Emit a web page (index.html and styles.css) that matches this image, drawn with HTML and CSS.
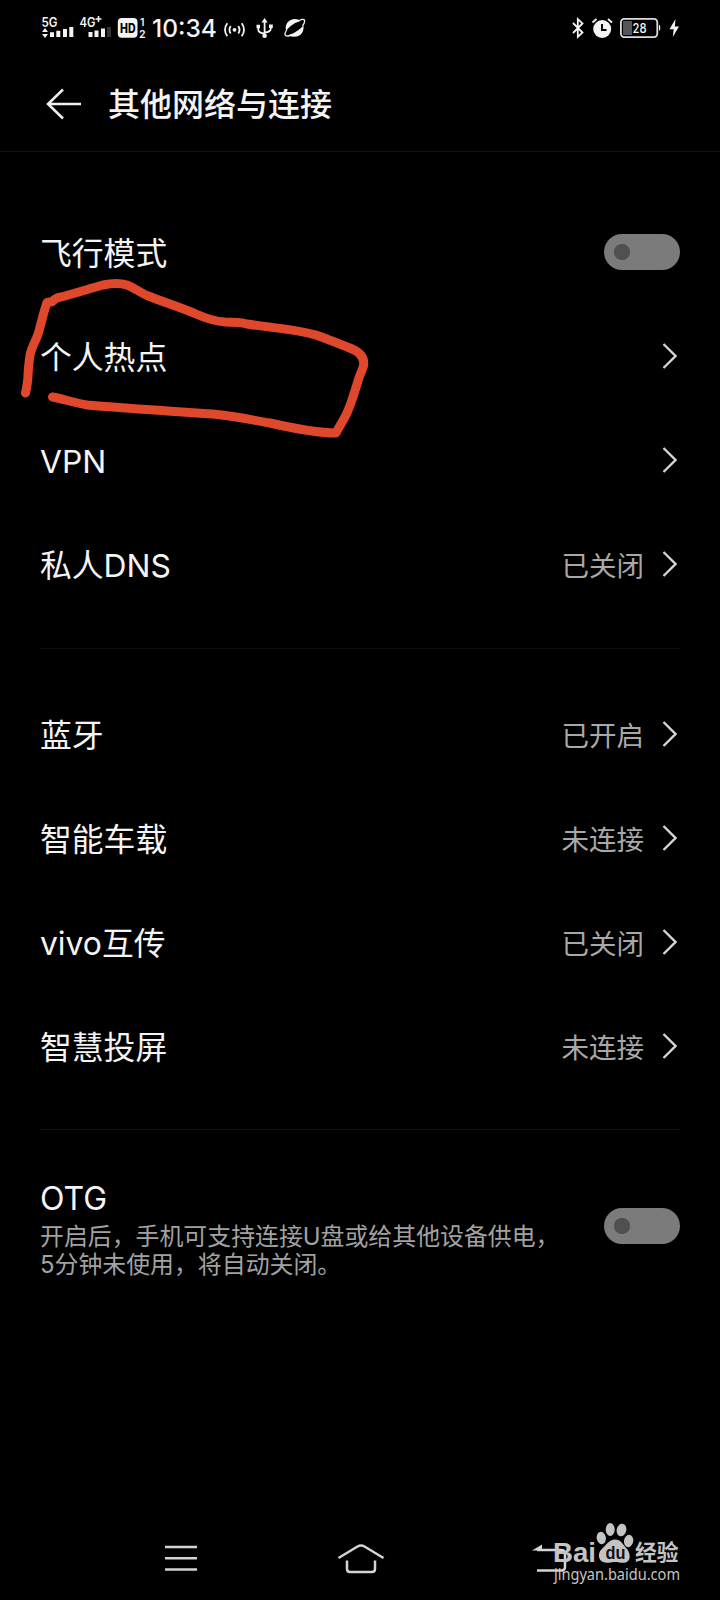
FILE: index.html
```html
<!DOCTYPE html>
<html lang="zh-CN">
<head>
<meta charset="utf-8">
<title>其他网络与连接</title>
<link rel="stylesheet" href="styles.css">
</head>
<body>
<div class="phone">
  <div class="status">
    <svg class="s-icon" width="37" height="28" viewBox="40 14 37 28">
      <text x="41.5" y="26.6" class="tiny" textLength="16" lengthAdjust="spacingAndGlyphs">5G</text>
      <path d="M42 32l3-4 3 4zM42 34l3 4 3-4z"/>
      <path d="M50 32.300h4V37h-4zM56.300 30.700h4V37h-4zM63 29h4v8h-4zM69.300 27h4v10h-4z"/>
    </svg>
    <svg class="s-icon" width="37" height="28" viewBox="77 14 37 28">
      <text x="79.500" y="26.600" class="tiny" textLength="16" lengthAdjust="spacingAndGlyphs">4G</text>
      <path d="M95.500 19h6M98.500 16v6" stroke="#f4f4f4" stroke-width="1.600"/>
      <path d="M88.500 32h4v5h-4zM94.500 30.500h4V37h-4zM101 28.500h4V37h-4z"/>
      <path d="M107 27h4v10h-4z" fill="#333"/>
    </svg>
    <svg class="s-icon" width="36" height="28" viewBox="114 14 36 28">
      <rect x="117.800" y="18" width="19.700" height="19.700" rx="4"/>
      <text x="120" y="32.600" class="hd" textLength="15.500" lengthAdjust="spacingAndGlyphs">HD</text>
      <text x="140" y="26" class="sim">1</text>
      <text x="139" y="37.500" class="sim">2</text>
    </svg>
    <span class="clock">10:34</span>
    <svg class="s-icon" width="28" height="28" viewBox="222 14 28 28">
      <circle cx="234.500" cy="29.800" r="1.900"/>
      <path class="line" d="M230.700 26q-2.500 3.800 0 7.600M238.300 26q2.500 3.800 0 7.600M227.300 23.300q-4.600 6.500 0 13M241.700 23.300q4.600 6.500 0 13"/>
    </svg>
    <svg class="s-icon" width="30" height="28" viewBox="250 14 30 28">
      <path class="line" d="M264.600 21v14M258.300 26.500v3q0 3.500 6.300 4M270.800 26.500v2q0 3.500-6.200 4"/>
      <path d="M261.500 22.500l3.100-4.500 3.100 4.500zM256.500 24.800h3.500v3.500h-3.500zM269 24.500h3.800V28H269z"/>
      <circle cx="264.600" cy="35.700" r="2.300"/>
    </svg>
    <svg class="s-icon" width="30" height="28" viewBox="280 14 30 28">
      <path d="M286 30.500C284.500 24 289 19 295 19q3.500 0 5.500 2-6 1.500-9.500 4.700-3 2.600-5 4.800zM303.400 25.500C304.500 31 301 36.800 294.500 36.800q-3.500 0-5.700-1.900 6-1.700 9.700-4.800 3-2.500 4.900-4.600z"/>
      <path class="ring" d="M287 29.500q-3 4.500-1.500 6 2 1.300 6.500-.7M299 20.500q4.500-2 5.500-.4.700 2.200-2 5.700"/>
    </svg>
    <div class="status-right">
      <svg class="s-icon" width="21" height="28" viewBox="569 14 21 28">
        <path class="line" d="M573 23l9.500 9.500-4.700 4.500V19l4.700 4.400L573 33"/>
      </svg>
      <svg class="s-icon" width="26" height="28" viewBox="590 14 26 28">
        <circle cx="602.200" cy="29" r="9"/>
        <path class="line" d="M592.500 22.500l4-3.500M612 22.500l-4-3.500"/>
        <path d="M602 24v6h4.500" fill="none" stroke="#000" stroke-width="1.900"/>
      </svg>
      <svg class="s-icon" width="47" height="28" viewBox="616 14 47 28">
        <rect x="620.900" y="18.900" width="36.400" height="18.200" rx="3.500" fill="#000" stroke="#ddd" stroke-width="1.800"/>
        <rect x="623" y="21" width="9" height="14" fill="#555"/>
        <text x="632.500" y="32.900" class="level" textLength="14" lengthAdjust="spacingAndGlyphs">28</text>
        <path d="M659 25h.8q1 2.800 0 5.500h-.8z"/>
      </svg>
      <svg class="s-icon" width="21" height="28" viewBox="663 14 21 28">
        <path d="M675.500 19l-6 10.200h4.200L672.800 37l6.200-10.500h-4.200z"/>
      </svg>
    </div>
  </div>

  <header class="header">
    <svg width="36" height="32" viewBox="0 0 36 32" class="back"><path d="M17 1.500L2 16l15 14.500M2 16h33"/></svg>
    <h1 class="title">其他网络与连接</h1>
  </header>

  <main class="list">
    <section class="group first">
      <div class="row"><span>飞行模式</span><i class="switch"></i></div>
      <div class="row"><span>个人热点</span><svg class="chev" viewBox="0 0 15 26"><path d="M1.500 1l12 12-12 12"/></svg></div>
      <div class="row"><span>VPN</span><svg class="chev" viewBox="0 0 15 26"><path d="M1.500 1l12 12-12 12"/></svg></div>
      <div class="row"><span>私人DNS</span><em class="value">已关闭</em><svg class="chev" viewBox="0 0 15 26"><path d="M1.500 1l12 12-12 12"/></svg></div>
    </section>
    <section class="group">
      <div class="row"><span>蓝牙</span><em class="value">已开启</em><svg class="chev" viewBox="0 0 15 26"><path d="M1.500 1l12 12-12 12"/></svg></div>
      <div class="row"><span>智能车载</span><em class="value">未连接</em><svg class="chev" viewBox="0 0 15 26"><path d="M1.500 1l12 12-12 12"/></svg></div>
      <div class="row"><span>vivo互传</span><em class="value">已关闭</em><svg class="chev" viewBox="0 0 15 26"><path d="M1.500 1l12 12-12 12"/></svg></div>
      <div class="row"><span>智慧投屏</span><em class="value">未连接</em><svg class="chev" viewBox="0 0 15 26"><path d="M1.500 1l12 12-12 12"/></svg></div>
    </section>
    <section class="otg">
      <div>
        <div class="otg-name">OTG</div>
        <p class="desc">开启后，手机可支持连接U盘或给其他设备供电，<br>5分钟未使用，将自动关闭。</p>
      </div>
      <i class="switch"></i>
    </section>
  </main>

  <nav class="nav">
    <svg width="34" height="28" viewBox="0 0 34 28"><path d="M1 2h32M1 13.300h32M1 24.600h32"/></svg>
    <svg class="home" width="48" height="32" viewBox="0 0 48 32"><path d="M1.500 15L20.500 3.500q3.500-2 7 0L46.500 15M10 17.500V26q0 3 3 3h22q3 0 3-3v-8.500"/></svg>
    <svg width="36" height="30" viewBox="0 0 36 30"><path d="M5 6h24q4 0 4 4v13q0 3.500-4 3.500H5"/><path d="M0 6.500L10 .5v6z" class="solid"/></svg>
  </nav>

  <svg class="scribble" viewBox="0 0 400 240">
    <path d="M25.500 133C27 126 28 121 28 115C28.500 108 29 99 30.500 93C33 84 38 77 39.500 69C42 60 44.500 49 47 42.500L52 41.700C54 40 55 38.500 58 37.700C73 34 90 28.500 103 25C112 23 121 23 127 25C135 28 139 32 147 35.500C163 42 180 47 196 54C205 58 216 61.500 225 62C233 62 240 62 247 64C271 68 293 68.500 316 75C327 79 340 84 351 88.500C360 92 365 98 363.500 106C362 111 359.500 115 358 121C354 134 351 145 346 155C343 161 339 167 336 173C315 173 292 168 270 163C252 160 235 156 217 154.500C198 153 178 152 162 150.500C138 149 112 147 87 145C75 143 63 139 52.500 137"/>
  </svg>

  <svg class="watermark" width="136" height="72" viewBox="550 1518 136 72">
    <text x="553" y="1562" class="wm-bai" textLength="43" lengthAdjust="spacingAndGlyphs">Bai</text>
    <g>
      <ellipse cx="601.300" cy="1538" rx="4.600" ry="6.200" transform="rotate(-12 601.300 1538)"/>
      <ellipse cx="610.200" cy="1529.500" rx="4.500" ry="6.500"/>
      <ellipse cx="621.500" cy="1530" rx="4.800" ry="6.300" transform="rotate(12 621.500 1530)"/>
      <ellipse cx="628.600" cy="1541" rx="4.600" ry="6.200" transform="rotate(12 628.600 1541)"/>
      <path d="M615 1539.500c6 0 8 5 11.500 9 4 4 5.500 14-3 14.300-3 0-5.500-.8-8.500-.8s-5 .8-8.500.8c-8 0-10-9-4.500-14 4.500-4 7-9.300 13-9.300z"/>
    </g>
    <text x="605.500" y="1559" class="wm-du" textLength="20" lengthAdjust="spacingAndGlyphs">du</text>
    <text x="635" y="1560" class="wm-cn" textLength="43.500" lengthAdjust="spacingAndGlyphs">经验</text>
    <text x="554" y="1579.500" class="wm-url" textLength="126" lengthAdjust="spacingAndGlyphs">jingyan.baidu.com</text>
  </svg>
</div>
</body>
</html>
```
FILE: styles.css
```css
* { box-sizing: border-box; }
body {
  margin: 0;
  background: #000;
  color: #f4f4f4;
  font-family: Inter, "Noto Sans CJK SC", sans-serif;
}
.phone {
  position: relative;
  width: 720px;
  height: 1600px;
  overflow: hidden;
  background: #000;
  display: flex;
  flex-direction: column;
}
.status {
  display: flex;
  height: 56px;
  padding: 14px 36px 0 40px;
}
.status-right { display: flex; margin-left: auto; }
.s-icon { display: block; fill: #f4f4f4; flex: none; }
.line { fill: none; stroke: #f4f4f4; stroke-width: 1.8; }
.ring { fill: none; stroke: #f4f4f4; stroke-width: 1.3; }
.tiny { font: 600 12.5px Inter, sans-serif; }
.hd { font: 800 12.5px Inter, sans-serif; fill: #000; }
.sim { font: 600 10.5px Inter, sans-serif; }
.level { font: 500 13px Inter, sans-serif; }
.clock {
  width: 72px;
  padding-left: 2px;
  font: 500 24.5px/29px Inter, sans-serif;
  letter-spacing: 0;
}
.header {
  display: flex;
  align-items: center;
  height: 96px;
  padding: 1px 0 0 46px;
  border-bottom: 1px solid #131313;
}
.back { fill: none; stroke: #f0f0f0; stroke-width: 2.5; }
.title {
  margin: 2px 0 0 26px;
  font-size: 32px;
  font-weight: 500;
  line-height: 48px;
}
.list { padding: 0 40px; }
.group {
  padding: 33px 0 31px;
  border-bottom: 1px solid #111;
}
.group.first { padding: 48px 0 32px; }
.row {
  display: flex;
  align-items: center;
  height: 104px;
  font-size: 31.8px;
  line-height: 48px;
}
.row > span { margin-right: auto; padding-top: 3px; }
.value {
  font-style: normal;
  font-size: 27.5px;
  color: #a8a8a8;
  margin-right: 18px;
  padding-top: 3px;
}
.chev {
  width: 15px;
  height: 26px;
  margin-right: 3px;
  fill: none;
  stroke: #d6d6d6;
  stroke-width: 2.3;
}
.switch {
  width: 76px;
  height: 36px;
  border-radius: 18px;
  background: radial-gradient(circle at 18px 18px, #505050 7.7px, #7b7b7b 8.5px);
}
.otg {
  display: flex;
  justify-content: space-between;
  padding-top: 48px;
}
.otg > .switch { margin-top: 30px; }
.otg-name { font-size: 32px; line-height: 42px; }
.desc {
  margin: 3px 0 0;
  font-size: 23.9px;
  line-height: 28px;
  color: #a2a2a2;
  white-space: nowrap;
}
.nav {
  display: flex;
  align-items: center;
  justify-content: space-between;
  margin-top: auto;
  height: 83px;
  padding: 0 152px 0 164px;
}
.nav svg { fill: none; stroke: #d4d4d4; stroke-width: 2.5; }
.nav .home { margin-right: 9px; }
.nav .solid { fill: #d4d4d4; stroke: none; }
.scribble {
  position: absolute;
  left: 0;
  top: 260px;
  width: 400px;
  height: 240px;
  fill: none;
  stroke: #e0482c;
  stroke-width: 9;
  stroke-linecap: round;
  stroke-linejoin: round;
}
.watermark {
  position: absolute;
  left: 550px;
  top: 1518px;
  fill: #c4c4c4;
}
.wm-bai { font: 700 28px "Liberation Sans", sans-serif; }
.wm-du { font: 700 18px "Liberation Sans", sans-serif; fill: #111; }
.wm-cn { font: 700 21.5px "Noto Sans CJK SC", sans-serif; }
.wm-url { font: 400 15.5px "Noto Sans", sans-serif; }
```
